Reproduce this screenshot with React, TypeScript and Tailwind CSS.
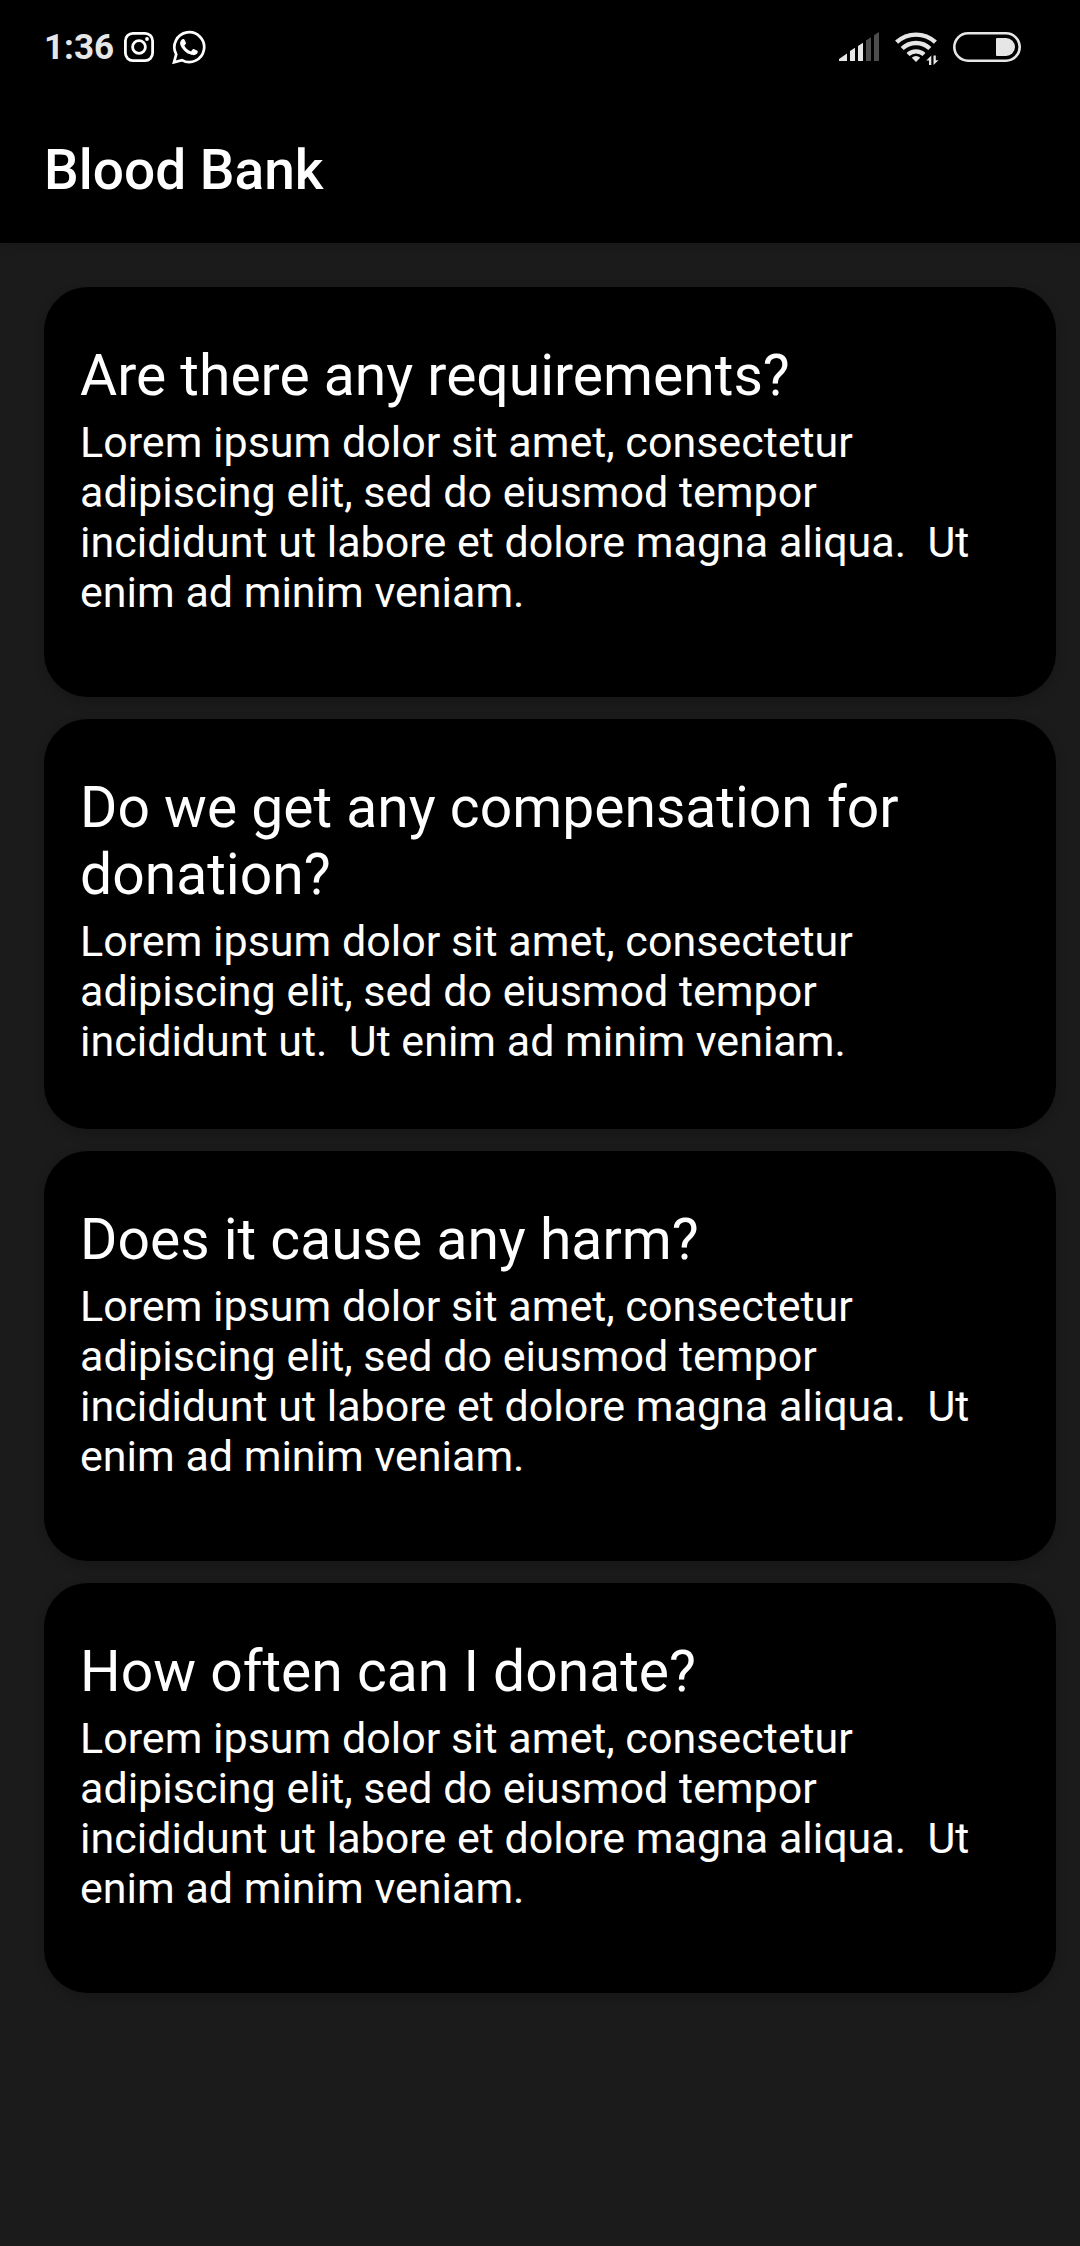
const BODY_LONG =
  'Lorem ipsum dolor sit amet, consectetur adipiscing elit, sed do eiusmod tempor incididunt ut labore et dolore magna aliqua.\u00a0 Ut enim ad minim veniam.';
const BODY_SHORT =
  'Lorem ipsum dolor sit amet, consectetur adipiscing elit, sed do eiusmod tempor incididunt ut.\u00a0 Ut enim ad minim veniam.';

const FAQS = [
  { question: 'Are there any requirements?', answer: BODY_LONG },
  { question: 'Do we get any compensation for donation?', answer: BODY_SHORT },
  { question: 'Does it cause any harm?', answer: BODY_LONG },
  { question: 'How often can I donate?', answer: BODY_LONG },
];

function InstagramIcon() {
  return (
    <svg width="30" height="30" viewBox="0 0 30 30" fill="none" stroke="#fff" aria-label="Instagram">
      <rect x="1.4" y="1.4" width="27.2" height="27.2" rx="7.5" strokeWidth="2.8" />
      <circle cx="15" cy="15" r="6.4" strokeWidth="2.8" />
      <circle cx="23" cy="7" r="1.9" fill="#fff" stroke="none" />
    </svg>
  );
}

function WhatsAppIcon() {
  return (
    <svg width="34" height="34" viewBox="0 0 34 34" fill="none" aria-label="WhatsApp">
      <path d="M2 32.300 4.200 24.300A14.900 14.900 0 1 1 9.900 30.100Z" stroke="#fff" strokeWidth="2.700" />
      <path
        d="M12.600 10c-.4-.9-.8-.9-1.200-.9-.9 0-1.600.2-2 .8-.7.8-1.300 1.800-1.300 3.300 0 2 1.500 4.100 1.800 4.500.3.400 3 4.700 7.400 6.400 3.600 1.400 4.400 1.100 5.200 1 .8-.1 2.500-1 2.900-2 .4-1 .4-1.800.3-2-.2-.3-.5-.4-.9-.6l-2.900-1.400c-.5-.2-.8-.2-1.100.2l-1.400 1.700c-.3.400-.5.400-.9.200-.5-.2-1.800-.7-3.500-2.200-1.300-1.200-2.200-2.600-2.400-3.100-.3-.5 0-.7.2-.9l1.100-1.300c.2-.4.2-.6 0-1Z"
        fill="#fff"
      />
    </svg>
  );
}

function SignalIcon() {
  return (
    <svg width="43" height="30" viewBox="0 0 43 30" aria-label="Signal">
      <g fill="#e6e6e6">
        <path d="M1 29v-2l8-5.500V29Z" />
        <path d="M12 29V19l5-3.300V29Z" />
        <path d="M20 29V14l5-3.300V29Z" />
      </g>
      <g fill="#4d4d4d">
        <path d="M28 29V8.500l5-3.300V29Z" />
        <path d="M36 29V3.300L41 0V29Z" />
      </g>
    </svg>
  );
}

function WifiIcon() {
  return (
    <svg width="44" height="34" viewBox="0 0 44 34" aria-label="Wi-Fi">
      <g fill="none" stroke="#e6e6e6" strokeWidth="4.400">
        <path d="M1.600 10.200a28.500 28.500 0 0 1 38.800 0" />
        <path d="M7.200 16.500a20 20 0 0 1 27.600 0" />
        <path d="M13 22.500a11.800 11.800 0 0 1 16 0" />
      </g>
      <path d="M16.800 25.800a6 6 0 0 1 8.400 0L21 30Z" fill="#e6e6e6" />
      <path d="M36.300 23.500V33H34v-4.500h-2.700Z M38.500 33v-9.500h2.300v4.800h2.700Z" fill="#e6e6e6" />
    </svg>
  );
}

function BatteryIcon() {
  return (
    <svg width="68" height="30" viewBox="0 0 68 30" aria-label="Battery">
      <rect x="1.300" y="1.300" width="65.400" height="27.400" rx="13.700" fill="none" stroke="#e6e6e6" strokeWidth="2.600" />
      <path d="M44 6h9a9 9 0 0 1 0 18h-9a1 1 0 0 1-1-1V7a1 1 0 0 1 1-1Z" fill="#e6e6e6" />
    </svg>
  );
}

export default function App() {
  return (
    <div className="min-h-screen bg-[#1b1b1b] font-[Roboto,sans-serif] text-white">
      <header className="bg-black shadow-[0_4px_10px_rgba(0,0,0,0.12)]">
        <div className="flex h-24 items-center justify-between pr-[59px] pb-[2px] pl-11">
          <div className="flex items-center gap-[10px]">
            <time className="pt-[2px] text-[35px] leading-10 font-bold text-[#e6e6e6]">1:36</time>
            <InstagramIcon />
            <div className="ml-2">
              <WhatsAppIcon />
            </div>
          </div>
          <div className="flex items-start gap-[14px] pt-1">
            <SignalIcon />
            <WifiIcon />
            <BatteryIcon />
          </div>
        </div>
        <div className="flex h-[147px] items-center px-11">
          <h1 className="text-[55px] leading-[64px] font-medium">Blood Bank</h1>
        </div>
      </header>
      <main className="flex flex-col gap-[22px] py-11 pr-6 pl-11">
        {FAQS.map((faq) => (
          <article
            key={faq.question}
            className="min-h-[410px] rounded-[44px] bg-black py-[55px] pr-11 pl-9 shadow-[0_4px_12px_rgba(0,0,0,0.2)]"
          >
            <h2 className="text-[57px] leading-[67px]">{faq.question}</h2>
            <p className="mt-2 text-[43px] leading-[50px]">{faq.answer}</p>
          </article>
        ))}
      </main>
    </div>
  );
}
